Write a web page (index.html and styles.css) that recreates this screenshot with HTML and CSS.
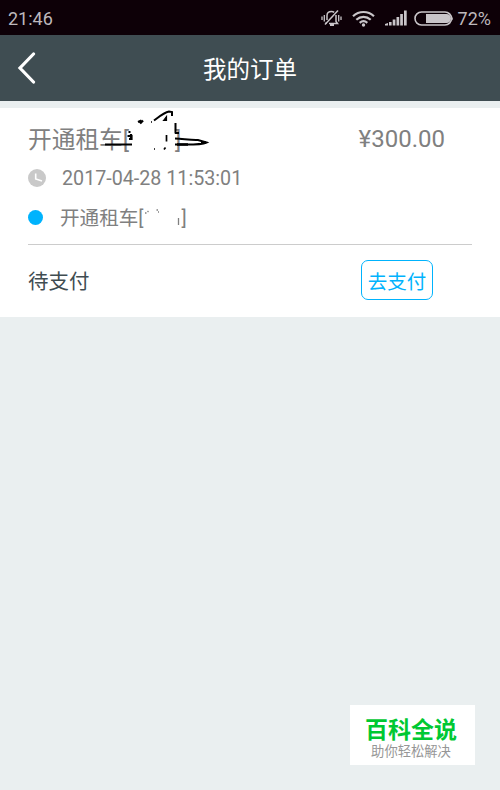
FILE: index.html
```
<!DOCTYPE html>
<html lang="zh-CN">

<head>
    <meta charset="UTF-8">
    <meta name="viewport" content="width=device-width, initial-scale=1.0">
    <title>我的订单</title>
    <link rel="stylesheet" href="styles.css">
</head>

<body>

    <div class="status-bar">
        <span class="time">21:46</span>
        <div class="status-icons">
            <svg class="icon-mute" width="21" height="18" viewBox="0 0 21 18" fill="none" stroke="#c9c5c9" stroke-width="1.500">
                <path d="M6 11V6.500C6 4 8 2.500 10.500 2.500c1 0 2 .3 2.700 .9M15 6v6.500l1.500 2H8M4.500 14H6" />
                <path d="M9 16h4" stroke-width="2" />
                <path d="M4 15.500L17 1.500" />
                <path d="M1 7.500v3.500M3.300 6v6.500M17.700 6v6.500M20 7.500v3.500" stroke-width="1.300" />
            </svg>
            <svg class="icon-wifi" width="23" height="17" viewBox="0 0 23 17" fill="none" stroke="#c9c5c9" stroke-width="2.200">
                <path d="M1 6.200c6-5.600 15-5.600 21 0M4.300 9.700c4.200-3.900 10.200-3.900 14.400 0M7.700 12.800c2.300-2 5.300-2 7.600 0" />
                <circle cx="11.500" cy="15" r="1.700" fill="#c9c5c9" stroke="none" />
            </svg>
            <svg class="icon-signal" width="22" height="16" viewBox="0 0 22 16" fill="#c9c5c9">
                <path d="M0 14l3-1v2.500H0zM4 12h2.600v3.500H4zM7.700 9.500h2.700v6H7.700zM11.500 7h2.700v8.500h-2.700zM15.200 4h2.700v11.500h-2.700zM19 0.500h2.700v15H19z" />
            </svg>
            <svg class="icon-battery" width="40" height="15" viewBox="0 0 40 15">
                <rect x="1" y="1" width="36.500" height="13" rx="6.500" fill="none" stroke="#c9c5c9" stroke-width="1.600" />
                <path d="M12 3h20.500a4.500 4.500 0 0 1 0 9H12z" fill="#c9c5c9" />
                <path d="M38 5.500q1.500 2 0 4z" fill="#c9c5c9" />
            </svg>
            <span class="percent">72%</span>
        </div>
    </div>

    <div class="nav-bar">
        <svg class="back" width="20" height="32" viewBox="0 0 20 32" fill="none" stroke="#fff" stroke-width="3.200" stroke-linecap="round">
            <path d="M16.500 2L3 16L16.500 30" />
        </svg>
        <h1>我的订单</h1>
    </div>

    <div class="order">
        <div class="order-title">
            <div class="name">开通租车[<span class="erased"></span>]
                <svg class="scribble" width="110" height="46" viewBox="0 0 110 46" fill="none" stroke="#000" stroke-width="2">
                    <path d="M5 39.500H32" />
                    <path d="M28.500 27h2M27.500 31h4v3h-2.500M31 29v5" stroke-width="2.200" />
                    <path d="M38 17l3.500-1.500M40 18.500L43 15.500" stroke-width="2.300" />
                    <path d="M54 15.500C60 11 64 7.500 69 6.500l3 .5v4" />
                    <path d="M63.500 15.500l3-4v4z" fill="#000" stroke-width="1.200" />
                    <path d="M66.500 30v6.500M64 44.500l1.500-2M54 44h1M51 17h1" stroke-width="1.700" />
                    <path d="M75.500 18v10.500M75 28h4" />
                    <path d="M75 33.500C84 34 92 35.500 98 35L106.500 37.500C100 40.500 85 39.500 75 39.500" />
                    <path d="M77 39.500h11M101 37.500h5" stroke-width="2.600" />
                </svg>
            </div>
            <span class="price">¥300.00</span>
        </div>
        <div class="order-row">
            <svg class="icon-clock" width="18" height="18" viewBox="0 0 18 18">
                <circle cx="9" cy="9" r="9" fill="#c9c9c9" />
                <path d="M7.700 4.500V10L14 12" fill="none" stroke="#fff" stroke-width="1.600" />
            </svg>
            <span class="date">2017-04-28 11:53:01</span>
        </div>
        <div class="order-row">
            <span class="dot"></span>
            <div class="detail">开通租车[<span class="erased"></span>]
                <svg class="specks" width="40" height="24" viewBox="0 0 40 24" fill="none" stroke="#808080">
                    <path d="M2 9h1.500M4.500 7l1 1M13.500 6h1.500M15 8h1M35.500 14v7" stroke-width="1.300" />
                </svg>
            </div>
        </div>
        <div class="order-footer">
            <span class="state">待支付</span>
            <button class="pay">去支付</button>
        </div>
    </div>

    <div class="watermark">
        <strong>百科全说</strong>
        <span>助你轻松解决</span>
    </div>

</body>

</html>
```
FILE: styles.css
```
:root {
    --blue: #00b3fd;
    --grey: #808080;
    --dark: #3f4c51;
}

* {
    margin: 0;
    padding: 0;
    box-sizing: border-box;
}

body {
    height: 790px;
    display: flex;
    flex-direction: column;
    background-color: #eaeff0;
    font-family: Roboto, "Noto Sans CJK SC", sans-serif;
    overflow: hidden;
}

svg {
    display: block;
    flex-shrink: 0;
}

.status-bar {
    height: 35px;
    padding: 1px 9px 0 8px;
    display: flex;
    align-items: center;
    justify-content: space-between;
    background-color: #0d0007;
    color: #bdb8bc;
    font-size: 18px;
}

.status-icons {
    display: flex;
    align-items: center;
}

.icon-wifi {
    margin-left: 10px;
}

.icon-signal {
    margin-left: 10px;
}

.icon-battery {
    margin: 0 4px 0 7px;
}

.nav-bar {
    height: 66px;
    padding: 0 17px;
    display: grid;
    grid-template-columns: 20px 1fr 20px;
    align-items: center;
    background-color: #3f4d52;
    color: #fff;
}

.nav-bar h1 {
    padding-top: 3px;
    font-size: 23.5px;
    font-weight: 400;
    line-height: 34px;
    text-align: center;
}

.order {
    height: 209px;
    margin-top: 7px;
    padding: 11px 28px 0;
    background-color: #fff;
    color: var(--grey);
}

.order-title {
    height: 40px;
    display: flex;
    justify-content: space-between;
    line-height: 40px;
    padding-right: 27px;
    font-size: 23.7px;
}

.name,
.detail {
    position: relative;
    white-space: nowrap;
}

.name {
    padding-top: 1px;
}

.erased {
    display: inline-block;
    width: 46px;
}

.scribble {
    position: absolute;
    left: 72px;
    top: -14px;
}

.price {
    font-size: 24px;
}

.order-row {
    height: 39px;
    display: flex;
    align-items: center;
    font-size: 19.6px;
}

.icon-clock {
    margin-bottom: 2px;
}

.date {
    margin-left: 16px;
    font-size: 19.7px;
}

.dot {
    width: 15px;
    height: 15px;
    margin-right: 17px;
    border-radius: 50%;
    background-color: var(--blue);
}

.detail {
    margin-top: -2px;
}

.detail .erased {
    width: 38px;
}

.specks {
    position: absolute;
    left: 83px;
    top: 2px;
}

.order-footer {
    height: 72px;
    margin-top: 7px;
    padding: 0 39px 2px 0;
    display: flex;
    align-items: center;
    justify-content: space-between;
    border-top: 1px solid #ccc;
}

.state {
    color: var(--dark);
    font-size: 20.5px;
}

.pay {
    width: 72px;
    height: 40px;
    padding-top: 1px;
    border: 1.5px solid var(--blue);
    border-radius: 7px;
    background-color: #fff;
    color: var(--blue);
    font-family: inherit;
    font-size: 19.5px;
}

.watermark {
    width: 125px;
    height: 60px;
    margin: auto 25px 25px auto;
    padding: 12px 3px 0 0;
    display: flex;
    flex-direction: column;
    align-items: center;
    background-color: #fff;
}

.watermark strong {
    color: #00c832;
    font-size: 23px;
    font-weight: 700;
    line-height: 28px;
}

.watermark span {
    color: #969696;
    font-size: 13.3px;
    line-height: 14px;
}
```
